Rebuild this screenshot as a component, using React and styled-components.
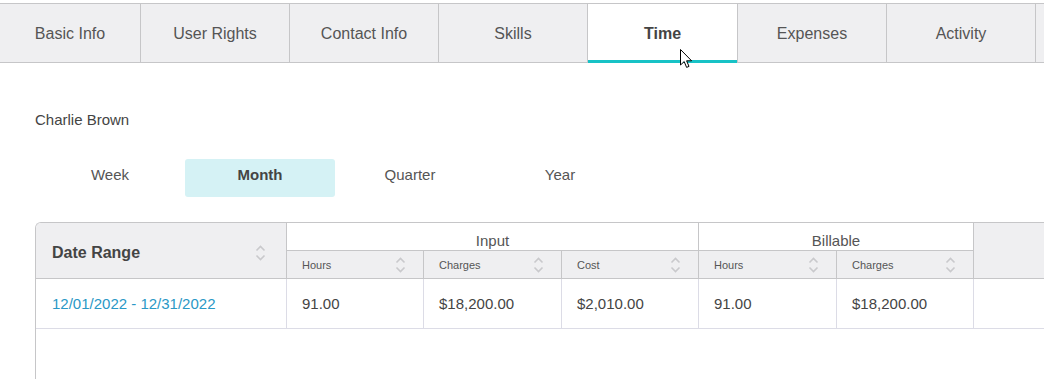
import React from "react";
import styled, { createGlobalStyle } from "styled-components";

const GlobalStyle = createGlobalStyle`
  html, body {
    margin: 0;
    padding: 0;
    background: #fff;
    font-family: "Liberation Sans", Arial, sans-serif;
    overflow: hidden;
  }
`;

const TABS = ["Basic Info", "User Rights", "Contact Info", "Skills", "Time", "Expenses", "Activity", ""];
const TAB_W = [141, 149, 149, 149, 150, 149, 149, 149];
const PERIODS = ["Week", "Month", "Quarter", "Year"];

const GRAY = "#c6c6c8";
const LIGHT = "#dcdce6";

const Page = styled.div`
  position: relative;
  width: 1044px;
  height: 379px;
  overflow: hidden;
  padding-top: 3px;
  box-sizing: border-box;
`;

const TabBar = styled.nav`
  display: flex;
  height: 58px;
  border-top: 1px solid ${GRAY};
  border-bottom: 1px solid ${GRAY};
  background: #efeff1;
`;

const Tab = styled.div`
  position: relative;
  flex: 0 0 ${p => p.$w}px;
  display: flex;
  align-items: center;
  justify-content: center;
  border-right: 1px solid ${GRAY};
  box-sizing: border-box;
  font-size: 16px;
  color: ${p => (p.$active ? "#444" : "#555")};
  font-weight: ${p => (p.$active ? 700 : 400)};
  background: ${p => (p.$active ? "#fff" : "transparent")};
  padding-top: 2px;

  &::after {
    content: "";
    display: ${p => (p.$active ? "block" : "none")};
    position: absolute;
    left: 0;
    right: 0;
    bottom: -1px;
    height: 3px;
    background: #17c2c6;
  }
`;

const Content = styled.div`
  padding-left: 35px;
`;

const Name = styled.div`
  margin-top: 48px;
  font-size: 15px;
  line-height: 17px;
  color: #444;
`;

const Periods = styled.div`
  display: flex;
  margin-top: 31px;
`;

const Period = styled.div`
  width: 150px;
  height: 38px;
  display: flex;
  align-items: center;
  justify-content: center;
  font-size: 15px;
  border-radius: 3px;
  color: ${p => (p.$active ? "#444" : "#555")};
  font-weight: ${p => (p.$active ? 700 : 400)};
  background: ${p => (p.$active ? "#d5f2f5" : "transparent")};
  padding-bottom: 8px;
  box-sizing: border-box;
`;

const TableWrap = styled.div`
  margin-top: 25px;
  width: 1100px;
  height: 200px;
  border-top: 1px solid ${GRAY};
  border-left: 1px solid ${GRAY};
  border-top-left-radius: 6px;
  overflow: hidden;
`;

const Grid = styled.div`
  display: grid;
  grid-template-columns: 251px 137px 138px 137px 138px 137px 1fr;
  grid-template-rows: 28px 28px 50px;
`;

const HeadCell = styled.div`
  display: flex;
  align-items: center;
  justify-content: ${p => (p.$center ? "center" : "space-between")};
  box-sizing: border-box;
  border-right: ${p => (p.$noRight ? "none" : `1px solid ${GRAY}`)};
  border-bottom: 1px solid ${GRAY};
  background: ${p => (p.$white ? "#fff" : "#efeff1")};
  color: #555;
  grid-column: ${p => p.$col || "auto"};
  grid-row: ${p => p.$row || "auto"};
`;

const MainHead = styled(HeadCell)`
  padding: 4px 20px 0 16px;
  font-size: 16px;
  font-weight: 700;
  color: #444;
`;

const GroupHead = styled(HeadCell)`
  font-size: 15px;
  padding-top: 8px;
`;

const SubHead = styled(HeadCell)`
  padding: 1px 17px 0 15px;
  font-size: 11px;
`;

const Cell = styled.div`
  display: flex;
  align-items: center;
  box-sizing: border-box;
  padding: 0 0 0 ${p => (p.$first ? 16 : 15)}px;
  border-right: ${p => (p.$noRight ? "none" : `1px solid ${LIGHT}`)};
  border-bottom: 1px solid ${LIGHT};
  font-size: 15px;
  color: ${p => (p.$link ? "#2a98c6" : "#444")};
`;

const Cursor = styled.svg`
  position: absolute;
  left: 680px;
  top: 49px;
`;

const SortIcon = () => (
  <svg width="11" height="18" viewBox="0 0 11 18" fill="none">
    <path d="M1.5 6.5 L5.5 2.5 L9.5 6.5" stroke="#c9c9cc" strokeWidth="1.6" />
    <path d="M1.5 11.5 L5.5 15.5 L9.5 11.5" stroke="#c9c9cc" strokeWidth="1.6" />
  </svg>
);

const SUBS = ["Hours", "Charges", "Cost", "Hours", "Charges"];
const ROW = ["91.00", "$18,200.00", "$2,010.00", "91.00", "$18,200.00"];

export default function App() {
  return (
    <Page>
      <GlobalStyle />
      <TabBar>
        {TABS.map((t, i) => (
          <Tab key={i} $w={TAB_W[i]} $active={t === "Time"}>
            {t}
          </Tab>
        ))}
      </TabBar>
      <Content>
        <Name>Charlie Brown</Name>
        <Periods>
          {PERIODS.map(p => (
            <Period key={p} $active={p === "Month"}>{p}</Period>
          ))}
        </Periods>
        <TableWrap>
          <Grid>
            <MainHead $col="1" $row="1 / 3">
              <span>Date Range</span>
              <SortIcon />
            </MainHead>
            <GroupHead $center $white $col="2 / 5" $row="1">Input</GroupHead>
            <GroupHead $center $white $col="5 / 7" $row="1">Billable</GroupHead>
            <HeadCell $noRight $col="7" $row="1 / 3" />
            {SUBS.map((s, i) => (
              <SubHead key={i} $col={`${i + 2}`} $row="2">
                <span>{s}</span>
                <SortIcon />
              </SubHead>
            ))}
            <Cell $first $link>12/01/2022 - 12/31/2022</Cell>
            {ROW.map((v, i) => (
              <Cell key={i}>{v}</Cell>
            ))}
            <Cell $noRight />
          </Grid>
        </TableWrap>
      </Content>
      <Cursor width="13" height="20" viewBox="0 0 13 20">
        <path
          d="M0.5 0.5 L0.5 16 L4.2 12.6 L6.6 18.4 L9 17.4 L6.6 11.8 L11.6 11.8 Z"
          fill="#fff"
          stroke="#000"
          strokeWidth="1"
          strokeLinejoin="round"
        />
      </Cursor>
    </Page>
  );
}
